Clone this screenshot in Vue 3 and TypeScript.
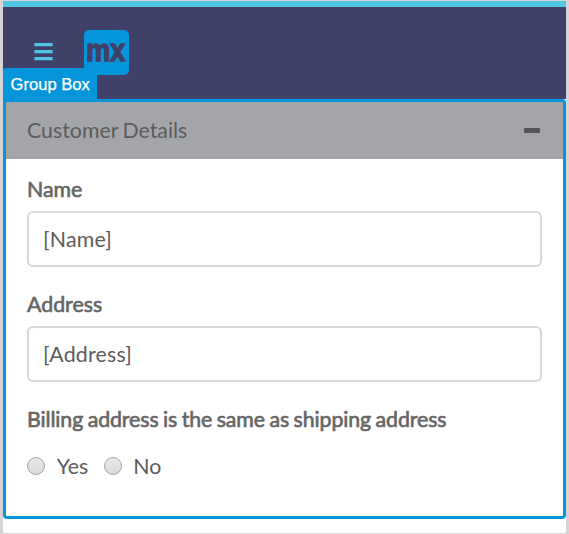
<script setup lang="ts">
import { ref } from 'vue'

interface Field {
  id: string
  label: string
  value: string
}

const fields: Field[] = [
  { id: 'name', label: 'Name', value: '[Name]' },
  { id: 'address', label: 'Address', value: '[Address]' },
]
const options: string[] = ['Yes', 'No']
const selected = ref<string | null>(null)
</script>

<template>
  <div class="canvas">
    <header class="topbar">
      <svg class="menu" width="19" height="18" viewBox="0 0 19 18" aria-hidden="true">
        <path d="M.4 0h18.2v3.2H.4zM.4 7.1h18.2v3.2H.4zM.4 14.1h18.2v3.2H.4z" fill="#50c8e3" />
      </svg>
      <svg class="logo" width="45" height="45" viewBox="0 0 45 45">
        <rect width="45" height="45" rx="5" fill="#0595db" />
        <text x="2.2" y="31.2" textLength="39" lengthAdjust="spacingAndGlyphs">mx</text>
      </svg>
    </header>
    <section class="group">
      <span class="tag">Group Box</span>
      <div class="head">
        <span>Customer Details</span>
        <i class="minus"></i>
      </div>
      <div class="body">
        <div v-for="f in fields" :key="f.id" class="field">
          <div class="label">{{ f.label }}</div>
          <div class="input">{{ f.value }}</div>
        </div>
        <div class="label question">Billing address is the same as shipping address</div>
        <div class="radios">
          <div v-for="o in options" :key="o" class="option" @click="selected = o">
            <i class="radio" :class="{ on: selected === o }"></i>
            <span>{{ o }}</span>
          </div>
        </div>
      </div>
    </section>
  </div>
</template>

<style>
body {
  background: #fff;
}
</style>

<style scoped>
.canvas {
  box-sizing: border-box;
  width: 569px;
  height: 534px;
  border: solid #d6d4d6;
  border-width: 1px 3px 1px 3px;
  background: #fff;
  font-family: Lato, sans-serif;
  font-size: 21.33px;
  color: #5c5c5c;
  overflow: hidden;
}
.topbar {
  box-sizing: border-box;
  display: flex;
  align-items: flex-start;
  height: 98px;
  padding: 23px 0 0 31px;
  border-top: 6px solid #50c8e3;
  background: #3f4168;
}
.menu {
  margin-top: 13px;
}
.logo {
  margin-left: 31px;
  overflow: visible;
}
.logo text {
  font: 700 32px "Liberation Sans", sans-serif;
  fill: #3f4168;
  stroke: #3f4168;
  stroke-width: 1.5px;
}
.group {
  position: relative;
  box-sizing: border-box;
  height: 420px;
  border: 3px solid #0595db;
  border-radius: 4px;
}
.tag {
  position: absolute;
  left: -3px;
  top: -34px;
  box-sizing: border-box;
  width: 94px;
  height: 34px;
  padding-left: 7.5px;
  border-radius: 3px 0 0 0;
  background: #0595db;
  color: #fff;
  font: 16.6px/33px "Liberation Sans", sans-serif;
  -webkit-text-stroke: 0.25px #fff;
  white-space: nowrap;
}
.head {
  box-sizing: border-box;
  display: flex;
  align-items: center;
  justify-content: space-between;
  height: 57px;
  padding: 0 23px 0 21px;
  background: #a4a5a9;
  line-height: 30px;
  word-spacing: -1px;
}
.head span {
  padding-bottom: 2px;
}
.minus {
  width: 16px;
  height: 5px;
  border-radius: 1px;
  background: #555;
}
.body {
  padding: 15px 21px 0;
}
.field {
  margin-bottom: 22px;
}
.label {
  height: 30px;
  margin-bottom: 7px;
  line-height: 30px;
  color: #666;
  -webkit-text-stroke: 0.65px #666;
}
.question {
  letter-spacing: -0.1px;
  word-spacing: -0.85px;
}
.input {
  box-sizing: border-box;
  height: 56px;
  padding: 0 14px;
  border: 2px solid #d7d7d7;
  border-radius: 6px;
  line-height: 53px;
  letter-spacing: 0.2px;
}
.radios {
  display: flex;
  gap: 15.5px;
  padding-top: 10px;
  line-height: 30px;
}
.option {
  display: flex;
  align-items: center;
  gap: 11.7px;
}
.radio {
  box-sizing: border-box;
  width: 18px;
  height: 18px;
  border: 1px solid #a5a5a5;
  border-radius: 50%;
  background: linear-gradient(#e9e9e9, #dadada);
}
.radio.on {
  background: radial-gradient(circle, #555 0 4px, #dedede 4.5px);
}
</style>
